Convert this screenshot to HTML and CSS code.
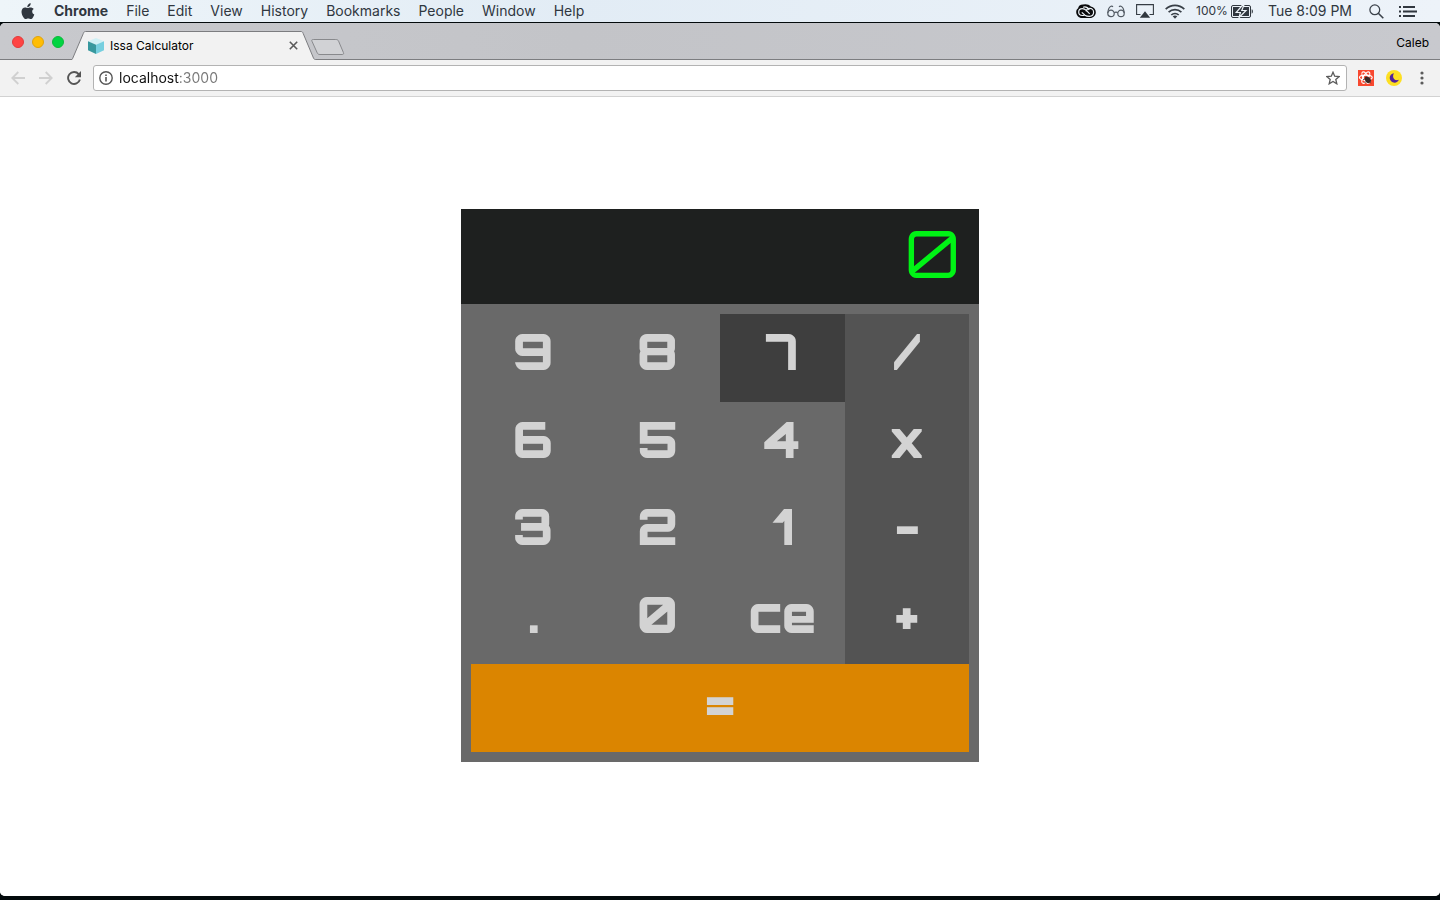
FILE: index.html
```html
<!DOCTYPE html>
<html lang="en">
<head>
<meta charset="utf-8">
<title>Issa Calculator</title>
<link rel="stylesheet" href="styles.css">
</head>
<body>
<header class="menubar">
  <nav class="menus" aria-label="Application menu">
    <button class="menu apple" aria-label="Apple"><svg width="14" height="17" viewBox="0 0 14 17" fill="currentColor"><path d="M9.700 0.300c.1 1.100-.4 2.100-1 2.800-.6.700-1.500 1.200-2.400 1.100-.1-1.100.4-2.100 1-2.700C7.900.8 8.900.3 9.700.3zM12.700 5.900c-.9.600-1.500 1.400-1.500 2.700 0 1.500.9 2.500 2.100 3-.3 1-.8 1.900-1.400 2.800-.6.900-1.200 1.700-2.200 1.700-.9 0-1.300-.6-2.500-.6s-1.600.6-2.500.6c-1 0-1.700-.9-2.300-1.800C1.200 12.500.5 10.600.5 8.800c0-2.800 1.800-4.300 3.600-4.300 1 0 1.800.6 2.500.6.700 0 1.600-.7 2.800-.7 1.300 0 2.500.500 3.300 1.500z"/></svg></button>
    <button class="menu app-name">Chrome</button>
    <button class="menu">File</button>
    <button class="menu">Edit</button>
    <button class="menu">View</button>
    <button class="menu">History</button>
    <button class="menu">Bookmarks</button>
    <button class="menu">People</button>
    <button class="menu">Window</button>
    <button class="menu">Help</button>
  </nav>
  <div class="status">
    <svg width="20" height="15" viewBox="0 0 20 15"><path fill="#0a0b0d" d="M7 .5C4 .5 2.500 2.200 2.100 4.300.9 5 .2 6.500.2 8c0 3.300 2.500 6 5.800 6h8c3.300 0 5.800-2.600 5.800-5.800 0-3-2-5.300-5-5.800C13.500 1.200 11.500.3 9.500.3z"/><g fill="none" stroke="#edf3f8" stroke-width="1.200"><path d="M13.700 9.800 10.300 6.400C9.300 5.300 8 4.600 6.300 4.600c-2 0-3.600 1.500-3.600 3.400 0 2 1.500 3.500 3.600 3.500h2.200"/><path d="M5.800 8.400 9 11.200c1 .8 2.500 1.100 4.400 1.100 2.500 0 4.200-1.800 4.200-4s-1.800-3.900-3.900-3.900c-1.700 0-3.200 1.200-3.600 2.900"/><path d="M7 3.300c2.400-.8 4.800.300 6.200 2.700"/></g></svg>
    <svg width="18" height="13" viewBox="0 0 18 13" fill="none" stroke="#525a63" stroke-width="1.200"><circle cx="4" cy="8.400" r="3.200"/><circle cx="14" cy="8.400" r="3.200"/><path d="M7.200 8c.8-1.300 2.800-1.300 3.600 0M.8 8C1 5 2 2 4 1.200c.8-.3 1.500 0 1.900.7M17.200 8C17 5 16 2 14 1.200c-.8-.3-1.500 0-1.900.7"/></svg>
    <svg width="18" height="14" viewBox="0 0 18 14"><path fill="none" stroke="#353c44" stroke-width="1.100" d="M4.500 10.500H.6V.6h16.800v9.900h-3.900"/><path fill="#30373f" d="m9 7.200 5.200 6.600H3.800z"/></svg>
    <svg width="20" height="15" viewBox="0 0 20 15" fill="none" stroke="#373e46" stroke-width="1.700"><path d="M.7 5.200c5.200-5.100 13.400-5.100 18.600 0M3.600 8.200c3.600-3.500 9.200-3.500 12.800 0M6.300 11c2.100-2 5.300-2 7.400 0"/><path fill="#373e46" stroke="none" d="M7.700 12.300c1.300-1.200 3.300-1.200 4.600 0L10 14.700z"/></svg>
    <span class="battery">100%<svg width="23" height="13" viewBox="0 0 23 13"><rect x=".5" y=".5" width="19" height="12" rx="1.500" fill="none" stroke="#30373f"/><rect x="2" y="2" width="16" height="9" fill="#30373f"/><path d="M20.700 4.300c1.600.5 1.600 3.900 0 4.400z" fill="#30373f"/><path d="M11.300.3 5.200 7.500h4.200L8 12.700l7-7.200h-4.200l2-5.200z" fill="#30373f" stroke="#edf3f8" stroke-width="1.200"/></svg></span>
    <time class="clock">Tue 8:09 PM</time>
    <button class="menu" aria-label="Search"><svg width="15" height="15" viewBox="0 0 15 15" fill="none" stroke="#3b424a" stroke-width="1.300"><circle cx="5.800" cy="5.800" r="4.900"/><path d="m9.300 9.300 5 5" stroke-width="1.600"/></svg></button>
    <button class="menu" aria-label="Notifications"><svg width="18" height="11" viewBox="0 0 18 11" fill="#30373f"><path d="M0 0h2v2H0zM0 4.500h2v2H0zM0 9h2v2H0zM4 0h12v2H4zM4 4.500h14v2H4zM4 9h12v2H4z"/></svg></button>
  </div>
</header>
<div class="window">
  <div class="tabstrip">
    <div class="lights">
      <button class="light close" aria-label="Close window"></button>
      <button class="light minimise" aria-label="Minimise window"></button>
      <button class="light expand" aria-label="Expand window"></button>
    </div>
    <div class="tab">
      <svg class="tab-shape" width="244" height="30" viewBox="0 0 244 30"><path d="M0 28.500c.3-.3.500-.7.800-1.400L11.300 2.500C11.800 1 12.500.5 13.500.5H229c1 0 1.700.5 2.200 2l10.300 24.600c.5 1 1 1.400 2 1.400h.5V30H0z" fill="#f2f2f2"/><path d="M0 28.500c.3-.3.500-.7.800-1.400L11.300 2.500C11.800 1 12.500.5 13.500.5H229c1 0 1.700.5 2.200 2l10.300 24.600c.5 1 1 1.400 2 1.400h.5" fill="none" stroke="#7c7d80"/></svg>
      <svg class="favicon" width="16" height="16" viewBox="0 0 16 16"><path fill="#d0f0f5" d="m8 0 8 3.300-8 3.500L0 3.300z"/><path fill="#37989e" d="m0 3.300 8 3.500V16l-8-3.800z"/><path fill="#76cfdf" d="m16 3.300-8 3.500V16l8-3.800z"/></svg>
      <span class="tab-title">Issa Calculator</span>
      <button class="icon-button tab-close" aria-label="Close tab"><svg width="9" height="9" viewBox="0 0 9 9" stroke="#5a5a5a" stroke-width="1.600"><path d="m.8.8 7.400 7.400M8.200.8.8 8.200"/></svg></button>
    </div>
    <button class="icon-button new-tab" aria-label="New tab"><svg width="34" height="16" viewBox="0 0 34 16"><path d="M2.300.5h22.500c1.500 0 2.200.4 2.800 1.700l4.800 11.300c.5 1.300.2 2-1.200 2H9c-1.500 0-2.300-.5-2.800-1.700L1 2.300C.4 1 .900.5 2.300.5z" fill="#d1d2d5" stroke="#88898c"/></svg></button>
    <button class="profile">Caleb</button>
  </div>
  <div class="toolbar">
    <div class="nav-buttons">
      <button class="icon-button" aria-label="Back"><svg width="14" height="14" viewBox="0 0 14 14" fill="none" stroke="#d0d0d0" stroke-width="1.800"><path d="M14 7H1.500M7.300 1 1.300 7l6 6"/></svg></button>
      <button class="icon-button" aria-label="Forward"><svg width="14" height="14" viewBox="0 0 14 14" fill="none" stroke="#d0d0d0" stroke-width="1.800"><path d="M0 7h12.500M6.700 1l6 6-6 6"/></svg></button>
      <button class="icon-button" aria-label="Reload"><svg width="14" height="14" viewBox="0 0 14 14"><path d="M11.700 3.100A6 6 0 1 0 12.900 8.500" fill="none" stroke="#555" stroke-width="1.900"/><path d="M14 0v6.200H7.800z" fill="#555"/></svg></button>
    </div>
    <div class="omnibox">
      <svg width="14" height="14" viewBox="0 0 14 14"><circle cx="7" cy="7" r="6.200" fill="none" stroke="#555" stroke-width="1.400"/><path d="M6.200 6h1.600v4.500H6.200zM6.200 3.400h1.600V5H6.200z" fill="#555"/></svg>
      <input class="address" type="text" aria-label="Address" value="localhost:3000">
      <button class="icon-button" aria-label="Bookmark this page"><svg width="14" height="14" viewBox="0 0 14 14"><path d="m7 1.200 1.700 4 4.400.4-3.300 2.900 1 4.300L7 10.500l-3.800 2.300 1-4.300L.9 5.600l4.400-.4z" fill="none" stroke="#5b5b5b" stroke-width="1.300"/></svg></button>
    </div>
    <div class="extensions">
      <button class="icon-button" aria-label="React developer tools"><svg width="16" height="16" viewBox="0 0 16 16"><path fill="#f8482f" d="M0 0h16v16H0z"/><g fill="none" stroke="#fff" stroke-width="1.100"><ellipse cx="7.800" cy="7.600" rx="6.400" ry="2.500"/><ellipse cx="7.800" cy="7.600" rx="6.400" ry="2.500" transform="rotate(60 7.800 7.600)"/><ellipse cx="7.800" cy="7.600" rx="6.400" ry="2.500" transform="rotate(120 7.800 7.600)"/></g><ellipse cx="9.800" cy="9.800" rx="2.600" ry="3.500" fill="#3a2725" transform="rotate(-38 9.800 9.800)"/><path d="m5 9.500 7-1.500M6.500 12.500 13 10M7 6.500l5.800 6.800" stroke="#3a2725" stroke-width=".8"/></svg></button>
      <button class="icon-button" aria-label="Night mode"><svg width="16" height="16" viewBox="0 0 16 16"><circle cx="8" cy="8" r="8" fill="#fddf22"/><path d="M8 3.300C5.500 3.400 3.600 5.500 3.700 8c.1 2.700 2.200 4.700 4.900 4.700 2 0 3.600-1.200 4.200-2.900-1.300.7-3.400.7-4.700-.7C6.800 7.700 6.700 5 8 3.300z" fill="#52219b"/></svg></button>
      <button class="icon-button browser-menu" aria-label="Browser menu"><svg width="4" height="14" viewBox="0 0 4 14" fill="#5b5b5b"><circle cx="2" cy="2" r="1.600"/><circle cx="2" cy="7" r="1.600"/><circle cx="2" cy="12" r="1.600"/></svg></button>
    </div>
  </div>
  <main class="page">
    <section class="calculator" aria-label="Calculator">
      <output class="display">0</output>
      <div class="keypad">
        <button class="key">9</button>
        <button class="key">8</button>
        <button class="key active">7</button>
        <button class="key operator">/</button>
        <button class="key">6</button>
        <button class="key">5</button>
        <button class="key">4</button>
        <button class="key operator">x</button>
        <button class="key">3</button>
        <button class="key">2</button>
        <button class="key">1</button>
        <button class="key operator">-</button>
        <button class="key">.</button>
        <button class="key">0</button>
        <button class="key">ce</button>
        <button class="key operator">+</button>
        <button class="key equals">=</button>
      </div>
    </section>
  </main>
</div>
</body>
</html>
```

FILE: styles.css
```css
* {
  box-sizing: border-box;
}

body {
  margin: 0;
  min-height: 100vh;
  padding-bottom: 4px;
  display: flex;
  flex-direction: column;
  background: #030a0c;
  font-family: Inter, "Liberation Sans", sans-serif;
}

button {
  margin: 0;
  padding: 0;
  border: 0;
  background: none;
  color: inherit;
  font: inherit;
}

svg {
  display: block;
  flex: none;
}

.menubar {
  display: flex;
  justify-content: space-between;
  height: 22px;
  padding: 0 23px 0 21px;
  background: linear-gradient(90deg, #eef5f9, #e2ecf5 40%, #edf3f9);
  color: #30373f;
  font-size: 14px;
  line-height: 22px;
}

.menus,
.status {
  display: flex;
  align-items: center;
  gap: 18px;
}

.status {
  gap: 11px;
}

.apple {
  margin-right: 1px;
}

.app-name {
  font-weight: 700;
}

.battery {
  display: flex;
  align-items: center;
  gap: 3px;
  font-size: 12px;
}

.clock {
  margin: 0 6px 0 3px;
}

.status .menu + .menu {
  margin-left: 4px;
}

.window {
  flex: 1;
  display: flex;
  flex-direction: column;
  margin-top: 1px;
  border-radius: 5px;
  overflow: hidden;
  background: #fff;
}

.tabstrip {
  display: flex;
  align-items: flex-end;
  height: 37px;
  padding: 2px 11px 0 12px;
  border-bottom: 1px solid #7c7d80;
  background: linear-gradient(90deg, #c8c9cd, #c3c4c8 40%, #c8c9ce);
}

.lights {
  display: flex;
  gap: 8px;
  margin-right: 8px;
  align-self: center;
}

.light {
  width: 12px;
  height: 12px;
  border: 1px solid;
  border-radius: 50%;
}

.close {
  background: #fe4444;
  border-color: #e23b3b;
}

.minimise {
  background: #ffbd05;
  border-color: #e0a30c;
}

.expand {
  background: #00d441;
  border-color: #0cb93c;
}

.tab {
  position: relative;
  display: flex;
  align-items: center;
  gap: 6px;
  width: 244px;
  height: 28px;
  padding: 1px 18px 0 16px;
  font-size: 12px;
}

.tab-shape {
  position: absolute;
  left: 0;
  top: 0;
}

.favicon,
.tab-title,
.tab-close {
  position: relative;
}

.tab-title {
  flex: 1;
}

.icon-button {
  display: grid;
  place-items: center;
}

.new-tab {
  margin-bottom: 4px;
  margin-left: -5px;
}

.profile {
  margin-left: auto;
  align-self: center;
  font-size: 12px;
}

.toolbar {
  display: flex;
  align-items: center;
  height: 37px;
  padding: 0 16px 0 11px;
  border-bottom: 1px solid #d2d2d2;
  background: #f2f2f2;
}

.nav-buttons {
  display: flex;
  gap: 14px;
  margin-right: 12px;
}

.omnibox {
  flex: 1;
  display: flex;
  align-items: center;
  gap: 6px;
  height: 26px;
  padding: 0 6px 0 5px;
  border: 1px solid #b3b3b3;
  border-radius: 3px;
  background: #fff;
}

.address {
  flex: 1;
  min-width: 0;
  padding: 0 0 2px;
  border: 0;
  outline: 0;
  color: #111;
  font: 14px Inter, "Liberation Sans", sans-serif;
  background: linear-gradient(90deg, #111 60px, #777 60px);
  -webkit-background-clip: text;
  background-clip: text;
  -webkit-text-fill-color: transparent;
}

.extensions {
  display: flex;
  align-items: center;
  gap: 12px;
  margin-left: 11px;
}

.browser-menu {
  margin-left: 6px;
}

.page {
  flex: 1;
  display: flex;
  justify-content: center;
  align-items: flex-start;
  padding: 112px 24px;
  background: #fff;
}

.calculator {
  width: 36vw;
  min-width: 320px;
  background: #696969;
  font-family: Orbitron, Inter, "DejaVu Sans", sans-serif;
}

.display {
  display: block;
  padding: 4px 20px 11px;
  background: #1e201f;
  color: #00f315;
  font-size: 65px;
  font-weight: 450;
  line-height: 80px;
  text-align: right;
}

.keypad {
  display: grid;
  grid-template-columns: repeat(4, 1fr);
  grid-auto-rows: 1fr;
  min-height: 458px;
  padding: 10px;
}

.key {
  padding: 5px 0 18px;
  color: #d3d3d3;
  font-size: 50px;
  font-weight: 900;
  line-height: 64px;
}

.operator {
  background: #535353;
}

.active,
.key:hover {
  background: #3e3e3e;
}

.equals,
.equals:hover {
  grid-column: 1 / -1;
  background: #db8500;
}
```
